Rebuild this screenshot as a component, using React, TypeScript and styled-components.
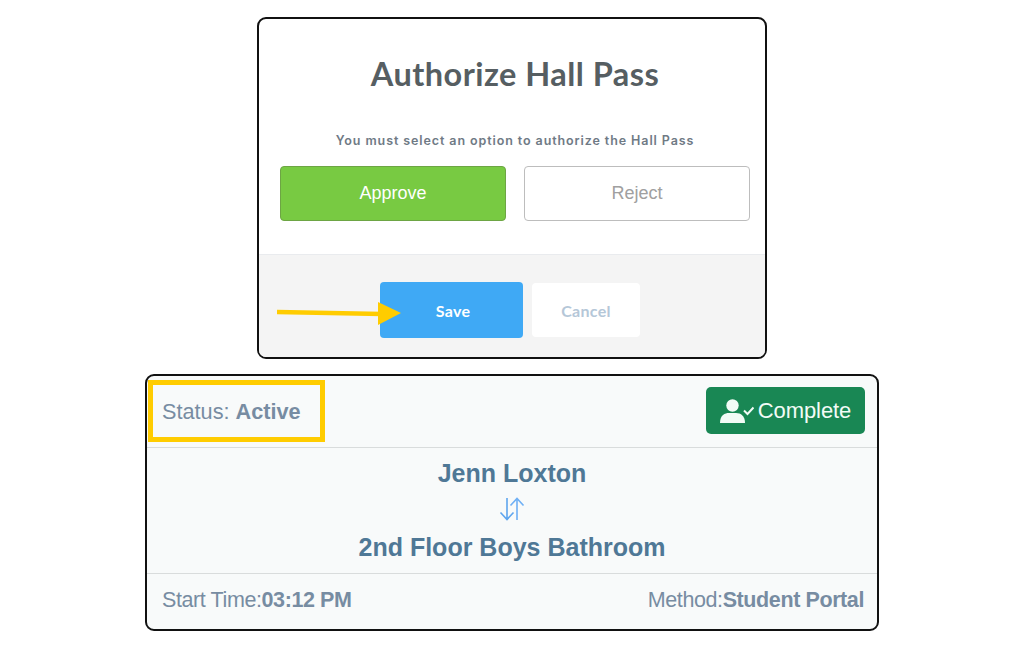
import React from "react";
import styled, { createGlobalStyle } from "styled-components";

const Global = createGlobalStyle`
  html, body { margin: 0; padding: 0; background: #fff; }
  body { font-family: "Liberation Sans", Arial, sans-serif; }
`;

const Page = styled.div`
  width: 1024px;
  height: 650px;
  box-sizing: border-box;
  padding-top: 17px;
  display: flex;
  flex-direction: column;
  align-items: center;
  gap: 15px;
  overflow: hidden;
`;

const Modal = styled.section`
  position: relative;
  width: 510px;
  height: 342px;
  box-sizing: border-box;
  border: 2px solid #111;
  border-radius: 9px;
  overflow: hidden;
  display: flex;
  flex-direction: column;
  background: #fff;
`;

const ModalBody = styled.div`
  height: 236px;
  flex: none;
  box-sizing: border-box;
  padding: 35px 15px 0 21px;
  display: flex;
  flex-direction: column;
  align-items: center;
  border-bottom: 1px solid #e9ebee;
`;

const Title = styled.h1`
  margin: 0;
  font: 700 32.5px/40px Lato, sans-serif;
  color: #565e62;
  letter-spacing: 0.45px;
`;

const Hint = styled.p`
  margin: 39px 0 0;
  font: 600 12.5px/16px Inter, sans-serif;
  color: #6f7a85;
  letter-spacing: 0.9px;
`;

const Choices = styled.div`
  margin-top: 17px;
  display: flex;
  gap: 18px;
  width: 100%;
`;

const Choice = styled.button<{ $on?: boolean }>`
  width: 226px;
  height: 55px;
  box-sizing: border-box;
  border-radius: 4px;
  font: 400 18px "Liberation Sans", sans-serif;
  border: 1px solid ${(p) => (p.$on ? "#6da544" : "#bdbdbd")};
  background: ${(p) => (p.$on ? "#78ca42" : "#fff")};
  color: ${(p) => (p.$on ? "#fff" : "#a0a0a0")};
`;

const ModalFooter = styled.div`
  flex: 1;
  background: #f4f4f4;
  display: flex;
  align-items: flex-start;
  padding: 27px 0 0 121px;
  gap: 9px;
`;

const FooterButton = styled.button<{ $primary?: boolean }>`
  box-sizing: border-box;
  border: none;
  border-radius: 4px;
  font: 700 16px Lato, sans-serif;
  letter-spacing: 0.3px;
  padding: 0 0 0 ${(p) => (p.$primary ? "3px" : "0")};
  width: ${(p) => (p.$primary ? "143px" : "108px")};
  height: ${(p) => (p.$primary ? "56px" : "54px")};
  margin-top: ${(p) => (p.$primary ? "0" : "1px")};
  background: ${(p) => (p.$primary ? "#3fa9f5" : "#fff")};
  color: ${(p) => (p.$primary ? "#fff" : "#b5c7d8")};
`;

const Arrow = styled.svg`
  position: absolute;
  left: 18px;
  top: 270px;
  width: 130px;
  height: 50px;
`;

const Card = styled.section`
  position: relative;
  width: 734px;
  height: 257px;
  box-sizing: border-box;
  border: 2px solid #111;
  border-radius: 9px;
  overflow: hidden;
  background: #f8fafa;
  color: #778ca2;
  display: flex;
  flex-direction: column;
`;

const CardHeader = styled.div`
  height: 72px;
  flex: none;
  box-sizing: border-box;
  border-bottom: 1px solid #d9dcdc;
  padding: 0 12px 0 15px;
  display: flex;
  align-items: center;
  justify-content: space-between;
  font-size: 21.7px;
`;

const Strong = styled.b`
  font-weight: 700;
`;

const Highlight = styled.div`
  position: absolute;
  left: 1px;
  top: 4px;
  width: 177px;
  height: 62px;
  box-sizing: border-box;
  border: 5px solid #ffcc00;
`;

const CompleteButton = styled.button`
  width: 159px;
  height: 47px;
  margin-bottom: 2px;
  border: none;
  border-radius: 5px;
  background: #198754;
  color: #f2fbf6;
  font: 400 22px "Liberation Sans", sans-serif;
  letter-spacing: -0.1px;
  display: flex;
  align-items: center;
  justify-content: center;
  gap: 4px;
  padding: 0;
`;

const Route = styled.div`
  height: 126px;
  flex: none;
  box-sizing: border-box;
  border-bottom: 1px solid #d9dcdc;
  display: flex;
  flex-direction: column;
  align-items: center;
  padding-top: 10px;
  color: #4f7896;
`;

const Place = styled.div`
  font: 700 25px/30px "Liberation Sans", sans-serif;
`;

const SwapIcon = styled.svg`
  width: 26px;
  height: 26px;
  margin: 8px 0 10px;
  display: block;
`;

const CardFooter = styled.div`
  flex: 1;
  display: flex;
  align-items: center;
  justify-content: space-between;
  padding: 0 13px 2px 15px;
`;

const Meta = styled.span`
  font: 400 21.5px "Liberation Sans", sans-serif;
  letter-spacing: -0.4px;
`;

export default function App() {
  return (
    <Page>
      <Global />
      <Modal>
        <ModalBody>
          <Title>Authorize Hall Pass</Title>
          <Hint>You must select an option to authorize the Hall Pass</Hint>
          <Choices>
            <Choice $on>Approve</Choice>
            <Choice>Reject</Choice>
          </Choices>
        </ModalBody>
        <ModalFooter>
          <FooterButton $primary>Save</FooterButton>
          <FooterButton>Cancel</FooterButton>
        </ModalFooter>
        <Arrow viewBox="0 0 130 50">
          <path d="M0 23 L105 25" stroke="#ffcc00" strokeWidth="4.5" fill="none" />
          <path d="M101 13 L124 24 L101 36 Z" fill="#ffcc00" />
        </Arrow>
      </Modal>
      <Card>
        <CardHeader>
          <span>
            Status: <Strong>Active</Strong>
          </span>
          <CompleteButton>
            <svg width="34" height="24" viewBox="0 0 34 24">
              <circle cx="12.5" cy="6.5" r="6.2" fill="#f2fbf6" />
              <path d="M0 24 C0 16 5 14 9 14 H16 C21 14 25 17 25 24 Z" fill="#f2fbf6" />
              <path d="M24 11.5 L27.5 15 L33.5 8.5" stroke="#f2fbf6" strokeWidth="2" fill="none" />
            </svg>
            Complete
          </CompleteButton>
        </CardHeader>
        <Highlight />
        <Route>
          <Place>Jenn Loxton</Place>
          <SwapIcon viewBox="0 0 26 26">
            <path d="M8 2 V23 M1.5 16.5 L8 23.5 L14.5 16.5" stroke="#5ea5ee" strokeWidth="1.6" fill="none" />
            <path d="M18 24 V3 M11.5 9.5 L18 2.5 L24.5 9.5" stroke="#6fb0f5" strokeWidth="1.6" fill="none" />
          </SwapIcon>
          <Place>2nd Floor Boys Bathroom</Place>
        </Route>
        <CardFooter>
          <Meta>
            Start Time:<Strong>03:12 PM</Strong>
          </Meta>
          <Meta>
            Method:<Strong>Student Portal</Strong>
          </Meta>
        </CardFooter>
      </Card>
    </Page>
  );
}
